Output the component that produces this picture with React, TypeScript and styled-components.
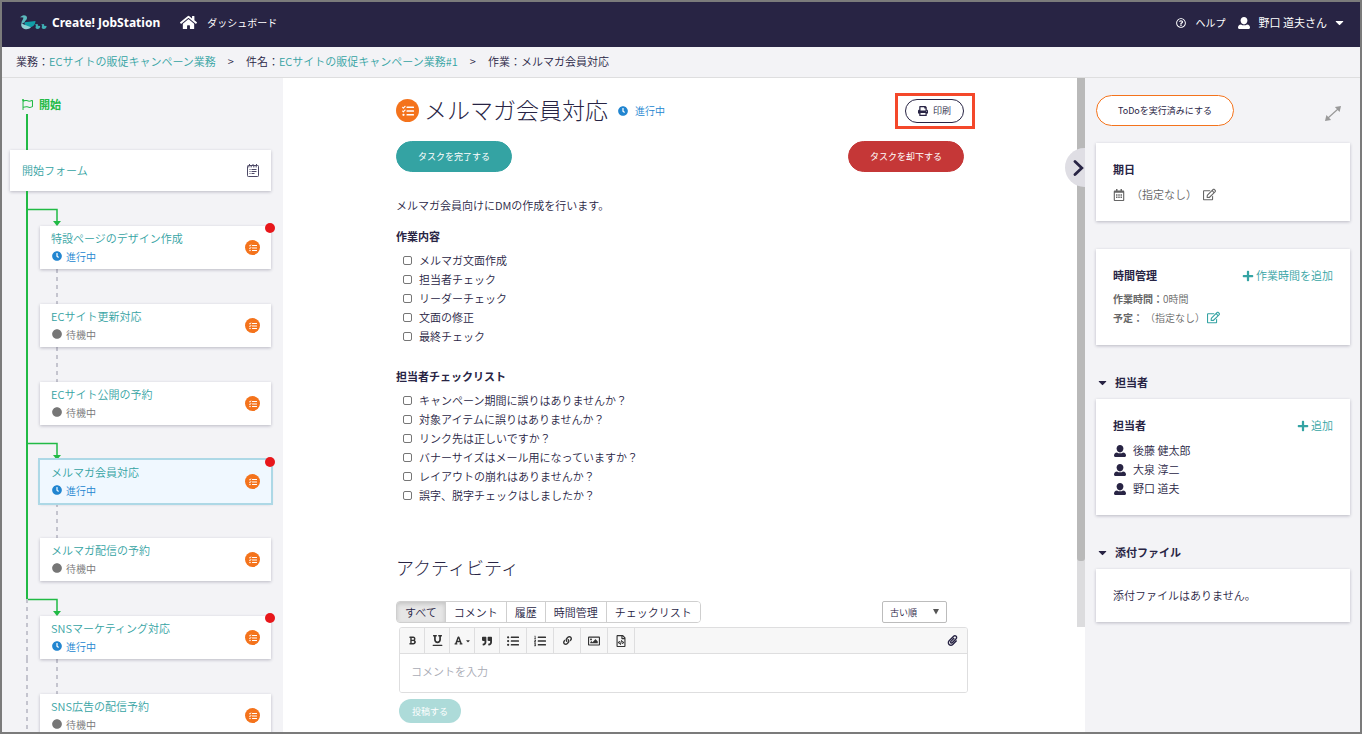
import React from "react";
import styled, { createGlobalStyle, css } from "styled-components";
import {
  FaBold,
  FaCaretDown,
  FaCircle,
  FaClock,
  FaFont,
  FaHome,
  FaLink,
  FaListOl,
  FaListUl,
  FaPaperclip,
  FaPlus,
  FaPrint,
  FaQuoteRight,
  FaRegCalendarAlt,
  FaRegEdit,
  FaRegFileCode,
  FaRegFlag,
  FaRegImage,
  FaRegQuestionCircle,
  FaTasks,
  FaUnderline,
} from "react-icons/fa";

const color = {
  navy: "#282444",
  teal: "#34a3a3",
  green: "#21ba45",
  orange: "#f4731c",
  red: "#c53737",
  blue: "#2185d0",
  gray: "#767676",
  panel: "#f3f3f6",
  line: "#dededf",
  dash: "#c4c4ce",
};

const GlobalStyle = createGlobalStyle`
  *, *::before, *::after { box-sizing: border-box; }
  body {
    margin: 0;
    color: ${color.navy};
    font-family: "Noto Sans CJK JP", "Noto Sans", sans-serif;
    font-size: 11px;
    font-weight: 350;
    line-height: 19px;
  }
  h1, h2, h3, p, ul, ol { margin: 0; padding: 0; }
  ul, ol { list-style: none; }
  a { color: ${color.teal}; text-decoration: none; }
  button, input, select, textarea { font: inherit; color: inherit; }
  button { cursor: pointer; }
  svg { display: block; flex: none; }
`;

/* ---------- shell ---------- */

const Shell = styled.div`
  display: flex;
  flex-direction: column;
  height: 100vh;
  overflow: hidden;
  border: 2px solid #7b7b7b;
  background: #fff;
`;

const Header = styled.header`
  display: flex;
  align-items: center;
  flex: none;
  height: 45px;
  padding: 0 14px 4px 18px;
  background: ${color.navy};
  color: #fff;
`;

const Brand = styled.a`
  display: flex;
  align-items: center;
  gap: 5px;
  color: #fff;
  font-family: "Noto Sans", sans-serif;
  font-size: 12px;
  font-weight: 700;
`;

const NavLink = styled.a`
  display: flex;
  align-items: center;
  gap: 10px;
  color: #fff;
  font-size: 10px;
  font-weight: 400;
`;

const MainNav = styled.nav`
  flex: 1;
  display: flex;
  margin-left: 20px;
`;

const UserNav = styled.nav`
  display: flex;
  align-items: center;
  gap: 12px;
`;

const UserMenu = styled.button`
  display: flex;
  align-items: center;
  gap: 6px;
  padding: 0;
  border: 0;
  background: none;
  color: #fff;
  font-weight: 400;

  span { margin-left: 3px; }
`;

const Breadcrumb = styled.nav`
  flex: none;
  height: 31px;
  padding: 5px 14px;
  border-bottom: 1px solid ${color.line};
  background: ${color.panel};

  ol { display: flex; }
  li + li::before { content: ">"; margin: 0 12px; }
`;

const Body = styled.div`
  display: flex;
  flex: 1;
  min-height: 0;
`;

/* ---------- flow sidebar ---------- */

const Sidebar = styled.aside`
  flex: none;
  width: 281px;
  overflow: hidden;
  padding: 17px 12px 0 8px;
  background: ${color.panel};
`;

const StartLabel = styled.div`
  display: flex;
  align-items: center;
  gap: 6px;
  padding-left: 12px;
  color: ${color.green};
  font-weight: 700;
`;

const StartRail = styled.div`
  height: 36px;
  margin-left: 16px;
  border-left: 2px solid ${color.green};
`;

const cardSurface = css`
  background: #fff;
  box-shadow: 0 1px 3px rgba(40, 36, 68, 0.28);
`;

const FormCard = styled.a`
  ${cardSurface}
  display: flex;
  align-items: center;
  justify-content: space-between;
  height: 41px;
  padding: 0 12px;
`;

const Step = styled.li`
  display: grid;
  grid-template-columns: 2px 1fr;
  margin-left: 16px;
`;

const Rail = styled.div`
  display: grid;
  grid-template-rows: 18px 1fr;
`;

const RailPart = styled.div<{ $done: boolean }>`
  width: 2px;
  background: ${(p) =>
    p.$done
      ? color.green
      : `repeating-linear-gradient(${color.dash} 0 4px, transparent 4px 8px)`};
`;

const TaskCard = styled.a<{ $selected: boolean }>`
  ${cardSurface}
  position: relative;
  display: flex;
  align-items: center;
  justify-content: space-between;
  height: 43px;
  margin-left: 12px;
  padding: 0 11px;
  ${(p) => p.$selected && "background: #f0f8ff; outline: 2px solid #add8e6;"}
`;

const TaskText = styled.span`
  display: flex;
  flex-direction: column;
  padding-bottom: 2px;
`;

const Alert = styled.span`
  position: absolute;
  top: -3px;
  right: -4px;
  width: 10px;
  height: 10px;
  border-radius: 50%;
  background: #e8171b;
`;

const Status = styled.span<{ $active: boolean; $wide?: boolean }>`
  display: flex;
  align-items: center;
  gap: ${(p) => (p.$wide ? 7 : 4)}px;
  padding-left: 1px;
  color: ${(p) => (p.$active ? color.blue : color.gray)};
  font-size: 10px;
  line-height: 17px;
`;

const TaskBadge = styled.span<{ $size: number }>`
  display: grid;
  place-items: center;
  flex: none;
  width: ${(p) => p.$size}px;
  height: ${(p) => p.$size}px;
  border-radius: 50%;
  background: ${color.orange};
  color: #fff;
`;

/* ---------- main ---------- */

const Main = styled.main`
  flex: 1;
  min-width: 0;
  overflow: hidden;
  padding-left: 4px;
`;

const Content = styled.div`
  max-width: 572px;
  margin: 0 auto;
  padding-top: 15px;
`;

const Row = styled.div`
  display: flex;
  align-items: center;
  justify-content: space-between;
`;

const TopRow = styled(Row)`
  height: 35px;
  padding-right: 4px;
`;

const TitleGroup = styled.div`
  display: flex;
  align-items: center;

  h1 {
    margin: 0 9px 0 5px;
    font-size: 23px;
    font-weight: 300;
    line-height: 33px;
    padding-bottom: 2px;
  }
`;

const Highlight = styled.div`
  position: relative;

  &::after {
    content: "";
    position: absolute;
    inset: -6px -11px -6px -10px;
    border: 3px solid #f4482a;
    pointer-events: none;
  }
`;

const PrintButton = styled.button`
  display: flex;
  align-items: center;
  gap: 5px;
  height: 24px;
  padding: 0 12px;
  border: 1px solid ${color.navy};
  border-radius: 12px;
  background: #fff;
  font-size: 9px;
`;

const Pill = styled.button<{ $tone: "teal" | "red" | "outline" }>`
  height: 31px;
  padding: 0 21px;
  border: 1px solid
    ${(p) => (p.$tone === "outline" ? color.orange : color[p.$tone])};
  border-radius: 16px;
  background: ${(p) => (p.$tone === "outline" ? "#fff" : color[p.$tone])};
  color: ${(p) => (p.$tone === "outline" ? color.navy : "#fff")};
  font-size: 9px;
  font-weight: 400;
`;

const Actions = styled(Row)`
  margin-top: 13px;
  padding-right: 4px;
`;

const Description = styled.p`
  margin-top: 24px;
`;

const ListSection = styled.section`
  margin-top: 12px;

  & + & { margin-top: 21px; }
  h3 { font-size: 11px; font-weight: 700; line-height: 19px; }
  ul { margin-top: 5px; padding-left: 7px; }
  label { display: flex; align-items: center; gap: 7px; }
`;

const Check = styled.input`
  appearance: none;
  width: 9px;
  height: 9px;
  margin: 0;
  border: 1px solid #767676;
  border-radius: 2px;
  background: #fff;
`;

const Activity = styled.section`
  margin-top: 50px;

  h2 { font-size: 18px; font-weight: 300; line-height: 24px; }
`;

const FilterRow = styled(Row)`
  margin-top: 22px;
  padding-right: 21px;
`;

const Tabs = styled.div`
  display: flex;
  height: 22px;
  overflow: hidden;
  border: 1px solid #cfcfcf;
  border-radius: 4px;
`;

const Tab = styled.button<{ $on: boolean }>`
  padding: 0 8px;
  border: 0;
  background: ${(p) => (p.$on ? "#e6e6e6" : "#fff")};
  box-shadow: ${(p) => (p.$on ? "inset 0 2px 4px rgba(0, 0, 0, 0.15)" : "none")};
  line-height: 18px;

  & + & { border-left: 1px solid #cfcfcf; }
`;

const SelectBox = styled.div`
  position: relative;

  select {
    display: block;
    appearance: none;
    width: 65px;
    height: 22px;
    padding: 0 7px;
    border: 1px solid #bcbcbc;
    border-radius: 2px;
    background: #fff;
    font-size: 9px;
  }
  svg {
    position: absolute;
    top: 8px;
    right: 8px;
    pointer-events: none;
  }
`;

const Editor = styled.div`
  margin: 4px 0 0 3px;
  overflow: hidden;
  border: 1px solid ${color.line};
  border-radius: 3px;
`;

const Toolbar = styled.div`
  display: flex;
  height: 26px;
  border-bottom: 1px solid ${color.line};
  background: #f7f7f7;
  color: #333;
`;

const Tool = styled.button<{ $wide?: boolean; $last?: boolean }>`
  display: flex;
  align-items: center;
  justify-content: center;
  gap: 2px;
  width: ${(p) => (p.$wide ? 27 : 25)}px;
  padding: 0;
  border: 0;
  border-right: 1px solid ${color.line};
  background: none;
  ${(p) => p.$last && "margin-left: auto; width: 30px; border-right: 0;"}
`;

const CommentBox = styled.textarea`
  display: block;
  width: 100%;
  height: 38px;
  padding: 8px 11px;
  border: 0;
  outline: 0;
  resize: none;
  line-height: 19px;

  &::placeholder { color: #a9abb5; opacity: 1; }
`;

const PostButton = styled.button`
  height: 24px;
  margin: 6px 0 0 3px;
  padding: 0 13px;
  border: 0;
  border-radius: 12px;
  background: #addbd9;
  color: #fff;
  font-size: 9px;
  font-weight: 400;
`;

const ScrollTrack = styled.div`
  flex: none;
  width: 8px;
  height: 84%;
  background: #dcdcde;
`;

const ScrollThumb = styled.div`
  height: 88%;
  border-radius: 0 0 3px 3px;
  background: #b9b9b9;
`;

/* ---------- detail panel ---------- */

const Panel = styled.aside`
  position: relative;
  flex: none;
  width: 275px;
  padding: 17px 10px 0 11px;
  background: ${color.panel};
`;

const Collapse = styled.button`
  position: absolute;
  top: 70px;
  left: -20px;
  display: flex;
  align-items: center;
  justify-content: flex-end;
  width: 20px;
  height: 39px;
  padding: 0 1px 0 0;
  border: 0;
  border-radius: 20px 0 0 20px;
  background: #dfdee4;
`;

const ExpandButton = styled.button`
  margin: 6px 9px 0 0;
  padding: 0;
  border: 0;
  background: none;
  color: #999;
`;

const Card = styled.section<{ $top: number; $bottom: number }>`
  ${cardSurface}
  margin-top: ${(p) => p.$top}px;
  padding: 17px 17px ${(p) => p.$bottom}px;

  h3 { font-size: 11px; font-weight: 700; line-height: 19px; }
`;

const Meta = styled.div<{ $size: number; $gap: number; $top: number }>`
  display: flex;
  align-items: center;
  gap: ${(p) => p.$gap}px;
  margin-top: ${(p) => p.$top}px;
  color: #666;
  font-size: ${(p) => p.$size}px;

  b { font-weight: 700; }
`;

const IconButton = styled.button<{ $teal?: boolean }>`
  padding: 0;
  border: 0;
  background: none;
  color: ${(p) => (p.$teal ? color.teal : "#666")};
`;

const AddLink = styled.a`
  display: flex;
  align-items: center;
  gap: 2px;
`;

const Members = styled.ul`
  margin-top: 6px;

  li { display: flex; align-items: center; gap: 7px; padding-left: 1px; }
`;

const SectionToggle = styled.button`
  display: flex;
  align-items: center;
  gap: 6px;
  margin-top: 28px;
  padding: 0;
  border: 0;
  background: none;
  font-weight: 700;
`;

/* ---------- drawings ---------- */

const DuckLogo = () => (
  <svg width="27" height="15" viewBox="0 0 27 15" aria-hidden="true">
    <path d="M0 2.200 1.800.9C3 0 6.800-.2 7 2.800c.1 2-2 2.600-2.400 4.400L1.600 9C.8 6.600 3.400 5 3.400 2.600Z" fill="#5bb9bd" />
    <path d="M4.600 7.200 15.500 6c-.2 3.600-2.500 6-5.500 6.300C7 12.500 4.200 10.500 4.600 7.200Z" fill="#109fa8" />
    <path d="M1.400 8.600 11 12.300c-1.600 1.700-3.500 2.100-5.500 1.900C2.600 14 .6 11.500 1.400 8.600Z" fill="#8fd0d2" />
    <path d="M15 9.600 17 9c1 0 1.200.9.8 1.800l2.400.2c0 2-1 3-2.600 3-2 0-2.600-1.400-1.600-3.200Z" fill="#3fb0b5" />
    <path d="M21.200 9.600 23.200 9c1 0 1.200.9.8 1.800l2.600.2c0 2-1.200 3-2.800 3-2 0-2.600-1.400-1.600-3.200Z" fill="#3fb0b5" />
  </svg>
);

const PersonIcon = () => (
  <svg width="12" height="12" viewBox="0 0 12 12" fill="currentColor" aria-hidden="true">
    <path d="M6 0c2 0 3.400 1.400 3.400 3.500S8 7.400 6 7.400 2.600 5.600 2.600 3.500 4 0 6 0Z" />
    <path d="M3 7.400c1.800 1.200 4.200 1.200 6 0 2 .3 3 1.300 3 3.200 0 .9-.4 1.400-1.200 1.400H1.200C.4 12 0 11.500 0 10.600c0-1.900 1-2.900 3-3.200Z" />
  </svg>
);

const ChevronIcon = () => (
  <svg width="11" height="16" viewBox="0 0 11 16" fill="none" stroke={color.navy} aria-hidden="true">
    <path d="M2 1.500 8.800 8 2 14.500" strokeWidth="2.800" strokeLinecap="round" />
  </svg>
);

const FormIcon = () => (
  <svg width="12" height="13" viewBox="0 0 12 13" fill="none" stroke="#4d4966" aria-hidden="true">
    <rect x=".5" y="1.500" width="11" height="11" rx=".8" />
    <path d="M1 2.800h10" strokeDasharray="1.500 1" />
    <path d="M2.500 5.500h1M4.500 5.500h5M2.500 7.500h1M4.500 7.500h5M2.500 9.500h1M4.500 9.500h3" />
    <path d="M2.500 0v2M6 0v2M9.500 0v2" />
  </svg>
);

const ExpandIcon = () => (
  <svg width="16" height="15" viewBox="0 0 16 15" fill="currentColor" aria-hidden="true">
    <path d="M3 12 13 3" stroke="currentColor" strokeWidth="1.200" />
    <path d="M16 0 14.600 6 9.900 1ZM0 15 1.400 9 6.100 14Z" />
  </svg>
);

const BranchConnector = () => (
  <svg width="40" height="35" viewBox="0 0 40 35" aria-hidden="true">
    <path d="M0 18.500h29v12" fill="none" stroke={color.green} strokeWidth="1.500" />
    <path d="M25 30h8l-4 5Z" fill={color.green} />
  </svg>
);

const DashedConnector = () => (
  <svg width="40" height="35" viewBox="0 0 40 35" aria-hidden="true">
    <path d="M29 0v35" stroke={color.dash} strokeWidth="2" strokeDasharray="4 4" />
  </svg>
);

const Triangle = () => (
  <svg width="6" height="6" viewBox="0 0 6 6" fill="#555" aria-hidden="true">
    <path d="M0 0h6L3 5.500Z" />
  </svg>
);

const StatusTag = ({ active, wide }: { active: boolean; wide?: boolean }) => (
  <Status $active={active} $wide={wide}>
    {active ? <FaClock size={10} /> : <FaCircle size={10} />}
    {active ? "進行中" : "待機中"}
  </Status>
);

/* ---------- data ---------- */

const steps = [
  { title: "特設ページのデザイン作成", active: true },
  { title: "ECサイト更新対応", active: false },
  { title: "ECサイト公開の予約", active: false },
  { title: "メルマガ会員対応", active: true, selected: true },
  { title: "メルマガ配信の予約", active: false },
  { title: "SNSマーケティング対応", active: true },
  { title: "SNS広告の配信予約", active: false },
];

const lastActive = 5;

const checklists = [
  {
    title: "作業内容",
    items: ["メルマガ文面作成", "担当者チェック", "リーダーチェック", "文面の修正", "最終チェック"],
  },
  {
    title: "担当者チェックリスト",
    items: [
      "キャンペーン期間に誤りはありませんか？",
      "対象アイテムに誤りはありませんか？",
      "リンク先は正しいですか？",
      "バナーサイズはメール用になっていますか？",
      "レイアウトの崩れはありませんか？",
      "誤字、脱字チェックはしましたか？",
    ],
  },
];

const tabs = ["すべて", "コメント", "履歴", "時間管理", "チェックリスト"];
const members = ["後藤 健太郎", "大泉 淳二", "野口 道夫"];

const tools = [
  { label: "太字", icon: <FaBold size={9} /> },
  { label: "下線", icon: <FaUnderline size={11} /> },
  { label: "文字色", icon: <><FaFont size={9} /><FaCaretDown size={6} /></> },
  { label: "引用", icon: <FaQuoteRight size={10} /> },
  { label: "箇条書き", icon: <FaListUl size={12} />, wide: true },
  { label: "番号付きリスト", icon: <FaListOl size={12} />, wide: true },
  { label: "リンク", icon: <FaLink size={9} />, wide: true },
  { label: "画像", icon: <FaRegImage size={12} />, wide: true },
  { label: "コード", icon: <FaRegFileCode size={12} />, wide: true },
];

export default function App() {
  return (
    <>
      <GlobalStyle />
      <Shell>
        <Header>
          <Brand href="#">
            <DuckLogo />
            Create! JobStation
          </Brand>
          <MainNav>
            <NavLink href="#">
              <FaHome size={17} />
              ダッシュボード
            </NavLink>
          </MainNav>
          <UserNav>
            <NavLink href="#">
              <FaRegQuestionCircle size={10} />
              ヘルプ
            </NavLink>
            <UserMenu type="button">
              <PersonIcon />
              <span>野口 道夫さん</span>
              <FaCaretDown size={13} />
            </UserMenu>
          </UserNav>
        </Header>

        <Breadcrumb aria-label="パンくず">
          <ol>
            <li>業務：<a href="#">ECサイトの販促キャンペーン業務</a></li>
            <li>件名：<a href="#">ECサイトの販促キャンペーン業務#1</a></li>
            <li>作業：メルマガ会員対応</li>
          </ol>
        </Breadcrumb>

        <Body>
          <Sidebar>
            <StartLabel>
              <FaRegFlag size={11} />
              開始
            </StartLabel>
            <StartRail />
            <FormCard href="#">
              開始フォーム
              <FormIcon />
            </FormCard>
            <ol>
              {steps.map((s, i) => (
                <Step key={s.title}>
                  <Rail>
                    <RailPart $done={i <= lastActive} />
                    <RailPart $done={i < lastActive} />
                  </Rail>
                  <div>
                    {s.active ? <BranchConnector /> : <DashedConnector />}
                    <TaskCard href="#" $selected={!!s.selected}>
                      <TaskText>
                        {s.title}
                        <StatusTag active={s.active} />
                      </TaskText>
                      <TaskBadge $size={15}>
                        <FaTasks size={8} />
                      </TaskBadge>
                      {s.active && <Alert />}
                    </TaskCard>
                  </div>
                </Step>
              ))}
            </ol>
          </Sidebar>

          <Main>
            <Content>
              <TopRow>
                <TitleGroup>
                  <TaskBadge $size={23}>
                    <FaTasks size={12} />
                  </TaskBadge>
                  <h1>メルマガ会員対応</h1>
                  <StatusTag active wide />
                </TitleGroup>
                <Highlight>
                  <PrintButton type="button">
                    <FaPrint size={10} />
                    印刷
                  </PrintButton>
                </Highlight>
              </TopRow>
              <Actions>
                <Pill type="button" $tone="teal">タスクを完了する</Pill>
                <Pill type="button" $tone="red">タスクを却下する</Pill>
              </Actions>
              <Description>メルマガ会員向けにDMの作成を行います。</Description>
              {checklists.map((list) => (
                <ListSection key={list.title}>
                  <h3>{list.title}</h3>
                  <ul>
                    {list.items.map((item) => (
                      <li key={item}>
                        <label>
                          <Check type="checkbox" />
                          {item}
                        </label>
                      </li>
                    ))}
                  </ul>
                </ListSection>
              ))}
              <Activity>
                <h2>アクティビティ</h2>
                <FilterRow>
                  <Tabs>
                    {tabs.map((t, i) => (
                      <Tab key={t} type="button" $on={i === 0}>{t}</Tab>
                    ))}
                  </Tabs>
                  <SelectBox>
                    <select aria-label="並び順" defaultValue="old">
                      <option value="old">古い順</option>
                      <option value="new">新しい順</option>
                    </select>
                    <Triangle />
                  </SelectBox>
                </FilterRow>
                <Editor>
                  <Toolbar>
                    {tools.map((t) => (
                      <Tool key={t.label} type="button" aria-label={t.label} $wide={t.wide}>
                        {t.icon}
                      </Tool>
                    ))}
                    <Tool type="button" aria-label="添付" $last>
                      <FaPaperclip size={11} color={color.navy} />
                    </Tool>
                  </Toolbar>
                  <CommentBox aria-label="コメント" placeholder="コメントを入力" />
                </Editor>
                <PostButton type="button">投稿する</PostButton>
              </Activity>
            </Content>
          </Main>
          <ScrollTrack>
            <ScrollThumb />
          </ScrollTrack>

          <Panel>
            <Collapse type="button" aria-label="閉じる">
              <ChevronIcon />
            </Collapse>
            <Row>
              <Pill type="button" $tone="outline">ToDoを実行済みにする</Pill>
              <ExpandButton type="button" aria-label="拡大">
                <ExpandIcon />
              </ExpandButton>
            </Row>
            <Card $top={17} $bottom={17}>
              <h3>期日</h3>
              <Meta $size={11} $gap={6} $top={6}>
                <FaRegCalendarAlt size={12} />
                （指定なし）
                <IconButton type="button" aria-label="期日を編集">
                  <FaRegEdit size={13} />
                </IconButton>
              </Meta>
            </Card>
            <Card $top={28} $bottom={18}>
              <Row>
                <h3>時間管理</h3>
                <AddLink href="#">
                  <FaPlus size={12} />
                  作業時間を追加
                </AddLink>
              </Row>
              <Meta $size={10} $gap={0} $top={4}>
                <b>作業時間：</b>0時間
              </Meta>
              <Meta $size={10} $gap={2} $top={0}>
                <b>予定：</b>（指定なし）
                <IconButton type="button" aria-label="予定を編集" $teal>
                  <FaRegEdit size={13} />
                </IconButton>
              </Meta>
            </Card>
            <SectionToggle type="button">
              <FaCaretDown size={13} />
              担当者
            </SectionToggle>
            <Card $top={7} $bottom={17}>
              <Row>
                <h3>担当者</h3>
                <AddLink href="#">
                  <FaPlus size={12} />
                  追加
                </AddLink>
              </Row>
              <Members>
                {members.map((m) => (
                  <li key={m}>
                    <PersonIcon />
                    {m}
                  </li>
                ))}
              </Members>
            </Card>
            <SectionToggle type="button">
              <FaCaretDown size={13} />
              添付ファイル
            </SectionToggle>
            <Card $top={7} $bottom={17}>
              <p>添付ファイルはありません。</p>
            </Card>
          </Panel>
        </Body>
      </Shell>
    </>
  );
}
